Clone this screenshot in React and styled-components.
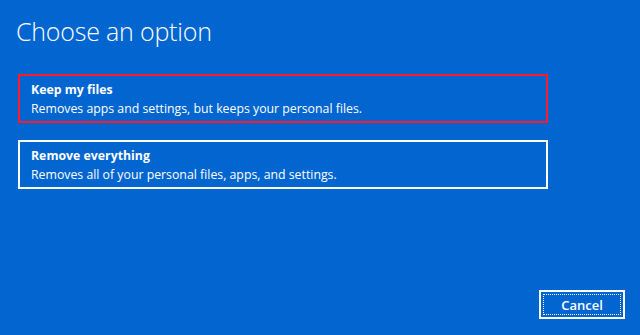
import React from "react";
import styled, { createGlobalStyle } from "styled-components";

const GlobalStyle = createGlobalStyle`
  html, body {
    margin: 0;
    padding: 0;
    background: #0366d0;
  }
  body {
    font-family: "Open Sans", "Noto Sans", sans-serif;
    color: #ffffff;
  }
`;

const Screen = styled.div`
  width: 100vw;
  height: 100vh;
  box-sizing: border-box;
  padding: 14px 15px 16px 18px;
  display: flex;
  flex-direction: column;
  background: #0366d0;
`;

const Title = styled.h1`
  margin: 0 0 0 -2px;
  font-size: 25px;
  font-weight: 300;
  line-height: 34px;
  letter-spacing: -0.2px;
`;

const OptionList = styled.div`
  display: flex;
  flex-direction: column;
  gap: 17px;
  margin-top: 26px;
`;

const Option = styled.div`
  width: 530px;
  box-sizing: border-box;
  border: 2px solid ${({ selected }) => (selected ? "#ff1a2a" : "#ffffff")};
  padding: 4px 11px 3px;
  cursor: pointer;
`;

const OptionTitle = styled.div`
  font-size: 12.3px;
  font-weight: 700;
  line-height: 19px;
`;

const OptionText = styled.div`
  font-size: 12.3px;
  font-weight: 400;
  line-height: 19px;
`;

const Footer = styled.div`
  margin-top: auto;
  display: flex;
  justify-content: flex-end;
`;

const Button = styled.button`
  width: 86px;
  height: 29px;
  box-sizing: border-box;
  border: 2px solid #ffffff;
  background: #0366d0;
  color: #ffffff;
  font-family: inherit;
  font-size: 13px;
  font-weight: 600;
  padding: 2px;
  cursor: pointer;
`;

const FocusRing = styled.span`
  display: flex;
  align-items: center;
  justify-content: center;
  height: 100%;
  box-sizing: border-box;
  border: 1px dotted #ffffff;
`;

const options = [
  {
    title: "Keep my files",
    text: "Removes apps and settings, but keeps your personal files.",
    selected: true,
  },
  {
    title: "Remove everything",
    text: "Removes all of your personal files, apps, and settings.",
  },
];

const App = () => (
  <>
    <GlobalStyle />
    <Screen>
      <Title>Choose an option</Title>
      <OptionList>
        {options.map((o) => (
          <Option key={o.title} selected={o.selected}>
            <OptionTitle>{o.title}</OptionTitle>
            <OptionText>{o.text}</OptionText>
          </Option>
        ))}
      </OptionList>
      <Footer>
        <Button>
          <FocusRing>Cancel</FocusRing>
        </Button>
      </Footer>
    </Screen>
  </>
);

export default App;
